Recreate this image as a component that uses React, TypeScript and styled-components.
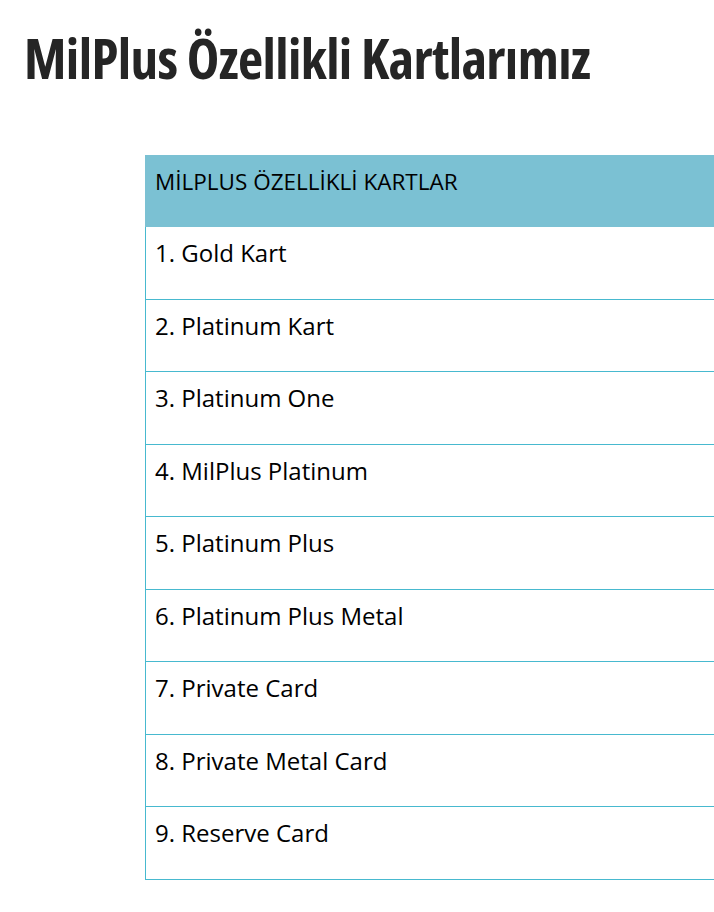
import styled, { createGlobalStyle } from "styled-components";

const GlobalStyle = createGlobalStyle`
  html, body {
    margin: 0;
    padding: 0;
    background: #fff;
    overflow-x: hidden;
  }
  body {
    font-family: "Open Sans", "Liberation Sans", sans-serif;
    color: #000;
  }
`;

const Page = styled.div`
  padding: 20px 0 32px 24px;
`;

const Title = styled.h1`
  margin: 0;
  font-family: "Open Sans", "DejaVu Sans Condensed", sans-serif;
  font-stretch: 75%;
  font-weight: 700;
  font-size: 55px;
  line-height: 76px;
  color: #252525;
  letter-spacing: -0.6px;
`;

const CardTable = styled.div`
  margin: 59px 0 0 121px;
  width: 569px;
  border-left: 1px solid #47b9cf;
`;

const HeaderCell = styled.div`
  box-sizing: border-box;
  height: 72px;
  margin-left: -1px;
  padding: 12px 10px 0 10px;
  background: #7bc1d3;
  font-size: 22.5px;
  line-height: 30px;
  text-transform: uppercase;
`;

const Row = styled.div`
  box-sizing: border-box;
  height: 72.5px;
  padding: 10px 9px 0 9px;
  border-bottom: 1px solid #47b9cf;
  font-size: 24px;
  line-height: 32px;
`;

const cards = [
  "Gold Kart",
  "Platinum Kart",
  "Platinum One",
  "MilPlus Platinum",
  "Platinum Plus",
  "Platinum Plus Metal",
  "Private Card",
  "Private Metal Card",
  "Reserve Card",
];

export default function App() {
  return (
    <>
      <GlobalStyle />
      <Page>
        <Title>MilPlus Özellikli Kartlarımız</Title>
        <CardTable>
          <HeaderCell>MİLPLUS ÖZELLİKLİ KARTLAR</HeaderCell>
          {cards.map((name, i) => (
            <Row key={name}>
              {i + 1}. {name}
            </Row>
          ))}
        </CardTable>
      </Page>
    </>
  );
}
